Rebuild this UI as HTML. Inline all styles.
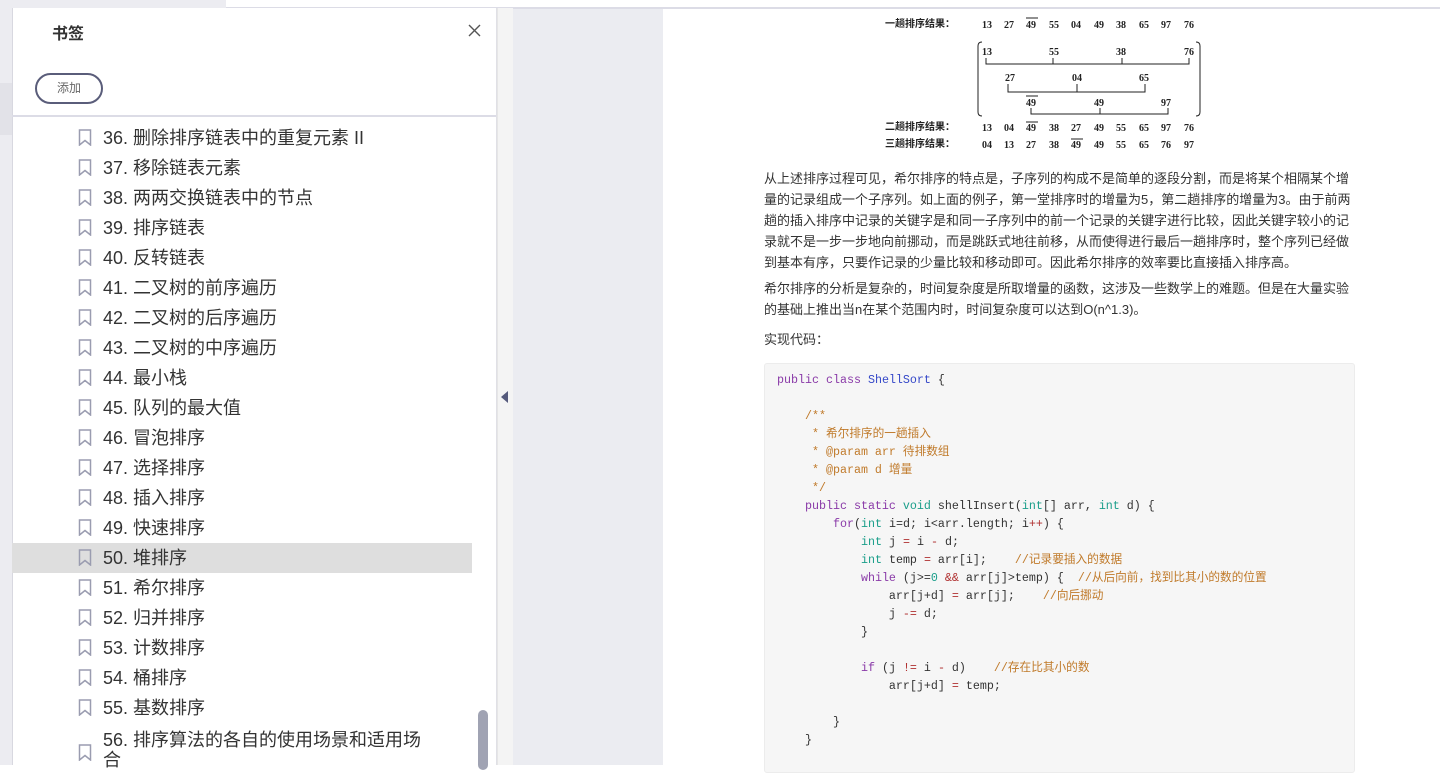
<!DOCTYPE html>
<html><head><meta charset="utf-8"><style>
*{margin:0;padding:0;box-sizing:border-box}
body{width:1440px;height:765px;overflow:hidden;position:relative;background:#fff;font-family:"Liberation Sans","Noto Sans CJK SC",sans-serif}
.abs{position:absolute}
.item{position:absolute;left:12px;width:460px;height:30px;font-size:18px;color:#333;line-height:30px}
.item span{position:absolute;left:91px;top:1px;white-space:nowrap}
.item svg{position:absolute;left:66px;top:7px}
.p{position:absolute;left:764px;width:590px;font-size:13px;line-height:21px;color:#333}
pre{font-family:"Liberation Mono","Noto Sans CJK SC",monospace;font-size:11.67px;line-height:18px;color:#333}
.k{color:#8a3aa8}.t{color:#1a9e8a}.c{color:#c07a2a}.n{color:#3548c8}.o{color:#b03030}
</style></head><body>
<div class="abs" style="left:0;top:0;width:12px;height:765px;background:#ececf1"></div>
<div class="abs" style="left:0;top:83px;width:12px;height:52px;background:#e2e2e8"></div>
<div class="abs" style="left:12px;top:0;width:214px;height:8px;background:#ececf1"></div>
<div class="abs" style="left:226px;top:7px;width:1214px;height:2px;background:#dcdce6"></div>
<div class="abs" style="left:12px;top:8px;width:485px;height:757px;background:#fff;border-left:1px solid #d8d8e0;border-right:1px solid #e0e0e6"></div>
<div class="abs" style="left:52px;top:20px;font-size:16px;font-weight:bold;color:#333">书签</div>
<svg class="abs" style="left:468px;top:24px" width="13" height="13"><path d="M1 1L12 12M12 1L1 12" stroke="#555" stroke-width="1.4"/></svg>
<div class="abs" style="left:35px;top:73px;width:68px;height:31px;border:2px solid #5a5d7a;border-radius:16px;font-size:12px;color:#666;text-align:center;line-height:27px">添加</div>
<div class="abs" style="left:12px;top:115px;width:484px;height:2px;background:#dcdce6"></div>
<div class="abs" style="left:12px;top:543px;width:460px;height:30px;background:#dedede"></div>
<div id="list"></div>
<div class="abs" style="left:478px;top:710px;width:10px;height:60px;background:#a0a3b3;border-radius:5px"></div>
<div class="abs" style="left:497px;top:8px;width:16px;height:757px;background:#f4f4f4;border-left:1px solid #e6e6e6"></div>
<div class="abs" style="left:501px;top:391px;width:0;height:0;border-top:6px solid transparent;border-bottom:6px solid transparent;border-right:7px solid #555a7c"></div>
<div class="abs" style="left:513px;top:9px;width:150px;height:756px;background:#ebecf1"></div>

<svg class="abs" style="left:860px;top:0" width="380" height="160" font-family="Liberation Serif,serif" font-weight="bold" font-size="10" fill="#222">
<g font-family="Liberation Sans,Noto Sans CJK SC,sans-serif" font-size="10"><text x="25" y="27">一趟排序结果：</text><text x="25" y="130">二趟排序结果：</text><text x="25" y="147">三趟排序结果：</text></g>
<g><text x="122" y="28">13</text><text x="144" y="28">27</text><text x="166" y="28">49</text><text x="189" y="28">55</text><text x="211" y="28">04</text><text x="234" y="28">49</text><text x="256" y="28">38</text><text x="279" y="28">65</text><text x="301" y="28">97</text><text x="324" y="28">76</text></g>
<text x="122" y="131">13</text><text x="144" y="131">04</text><text x="166" y="131">49</text><text x="189" y="131">38</text><text x="211" y="131">27</text><text x="234" y="131">49</text><text x="256" y="131">55</text><text x="279" y="131">65</text><text x="301" y="131">97</text><text x="324" y="131">76</text>
<text x="122" y="148">04</text><text x="144" y="148">13</text><text x="166" y="148">27</text><text x="189" y="148">38</text><text x="211" y="148">49</text><text x="234" y="148">49</text><text x="256" y="148">55</text><text x="279" y="148">65</text><text x="301" y="148">76</text><text x="324" y="148">97</text>
<text x="122" y="55">13</text><text x="189" y="55">55</text><text x="256" y="55">38</text><text x="324" y="55">76</text>
<text x="145" y="81">27</text><text x="212" y="81">04</text><text x="279" y="81">65</text>
<text x="166" y="106">49</text><text x="234" y="106">49</text><text x="301" y="106">97</text>
<g stroke="#222" stroke-width="1" fill="none">
<path d="M166 18h12M166 122h12M211 139h12M166 96h12"/>
<path d="M126 58v6h203v-6M193 58v6M262 58v6"/>
<path d="M148 84v8h137v-8M217 84v8"/>
<path d="M171 108v6h137v-6M240 108v6"/>
<path d="M122 42q-4 0-4 4v66q0 4 4 4M336 42q4 0 4 4v66q0 4-4 4"/>
</g></svg>

<div class="p" style="top:168px">从上述排序过程可见，希尔排序的特点是，子序列的构成不是简单的逐段分割，而是将某个相隔某个增量的记录组成一个子序列。如上面的例子，第一堂排序时的增量为5，第二趟排序的增量为3。由于前两趟的插入排序中记录的关键字是和同一子序列中的前一个记录的关键字进行比较，因此关键字较小的记录就不是一步一步地向前挪动，而是跳跃式地往前移，从而使得进行最后一趟排序时，整个序列已经做到基本有序，只要作记录的少量比较和移动即可。因此希尔排序的效率要比直接插入排序高。</div>
<div class="p" style="top:278px">希尔排序的分析是复杂的，时间复杂度是所取增量的函数，这涉及一些数学上的难题。但是在大量实验的基础上推出当n在某个范围内时，时间复杂度可以达到O(n^1.3)。</div>
<div class="p" style="top:329px">实现代码：</div>
<div class="abs" style="left:764px;top:363px;width:591px;height:410px;background:#f6f6f6;border:1px solid #ececec;border-radius:3px"></div>
<pre class="abs" style="left:777px;top:371px"><span class="k">public class</span> <span class="n">ShellSort</span> {

    <span class="c">/**</span>
<span class="c">     * 希尔排序的一趟插入</span>
<span class="c">     * @param arr 待排数组</span>
<span class="c">     * @param d 增量</span>
<span class="c">     */</span>
    <span class="k">public static</span> <span class="t">void</span> shellInsert(<span class="t">int</span>[] arr, <span class="t">int</span> d) {
        <span class="k">for</span>(<span class="t">int</span> i=d; i&lt;arr.length; i<span class="o">++</span>) {
            <span class="t">int</span> j <span class="o">=</span> i <span class="o">-</span> d;
            <span class="t">int</span> temp <span class="o">=</span> arr[i];    <span class="c">//记录要插入的数据</span>
            <span class="k">while</span> (j&gt;=<span class="t">0</span> <span class="o">&amp;&amp;</span> arr[j]&gt;temp) {  <span class="c">//从后向前，找到比其小的数的位置</span>
                arr[j+d] <span class="o">=</span> arr[j];    <span class="c">//向后挪动</span>
                j <span class="o">-=</span> d;
            }

            <span class="k">if</span> (j <span class="o">!=</span> i <span class="o">-</span> d)    <span class="c">//存在比其小的数</span>
                arr[j+d] <span class="o">=</span> temp;

        }
    }</pre>
<script>
var t=["36. 删除排序链表中的重复元素 II","37. 移除链表元素","38. 两两交换链表中的节点","39. 排序链表","40. 反转链表","41. 二叉树的前序遍历","42. 二叉树的后序遍历","43. 二叉树的中序遍历","44. 最小栈","45. 队列的最大值","46. 冒泡排序","47. 选择排序","48. 插入排序","49. 快速排序","50. 堆排序","51. 希尔排序","52. 归并排序","53. 计数排序","54. 桶排序","55. 基数排序","56. 排序算法的各自的使用场景和适用场"];
var ic='<svg width="14" height="17" viewBox="0 0 14 17"><path d="M1.5 1h11v15l-5.5-4.5-5.5 4.5z" fill="none" stroke="#9a9cb0" stroke-width="1.5"/></svg>';
var h="";
t.forEach(function(s,i){var y=122+i*30;
if(i==20){h+='<div class="item" style="top:'+(y+2)+'px"><span>'+s+'</span><span style="top:21px">合</span><svg width="14" height="17" viewBox="0 0 14 17" style="top:20px"><path d="M1.5 1h11v15l-5.5-4.5-5.5 4.5z" fill="none" stroke="#9a9cb0" stroke-width="1.5"/></svg></div>';}
else h+='<div class="item" style="top:'+y+'px">'+ic+'<span>'+s+'</span></div>';});
document.getElementById("list").innerHTML=h;
</script>
</body></html>
